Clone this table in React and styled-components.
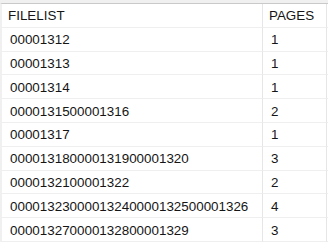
import React from "react";
import styled, { createGlobalStyle } from "styled-components";

const Global = createGlobalStyle`
  html, body { margin: 0; padding: 0; background: #ffffff; }
  body { font-family: "Liberation Sans", Arial, sans-serif; }
`;

const Frame = styled.div`
  width: 328px;
  height: 242px;
  overflow: hidden;
  background: #ffffff;
  border-top: 3px solid #f0f0f0;
  box-sizing: border-box;
`;

const Grid = styled.div`
  display: grid;
  grid-template-columns: 261px 64px 1px;
  grid-auto-rows: 23.8px;
  border-top: 1px solid #c9c9c9;
  border-left: 2px solid #f0f0f0;
`;

const Cell = styled.div`
  box-sizing: border-box;
  border-bottom: 1px solid #efefef;
  border-right: 1px solid #e6e6e6;
  display: flex;
  align-items: center;
  padding-left: ${(p) => (p.$header ? "6px" : "8px")};
  padding-top: 1px;
  font-size: 13.4px;
  color: #151515;
  white-space: nowrap;
  overflow: hidden;
  ${(p) => p.$num && `padding-left: ${p.$header ? "6px" : "8px"};`}
`;

const Edge = styled.div`
  box-sizing: border-box;
  border-bottom: 1px solid #efefef;
  background: #ffffff;
`;

const rows = [
  ["00001312", "1"],
  ["00001313", "1"],
  ["00001314", "1"],
  ["0000131500001316", "2"],
  ["00001317", "1"],
  ["000013180000131900001320", "3"],
  ["0000132100001322", "2"],
  ["00001323000013240000132500001326", "4"],
  ["000013270000132800001329", "3"],
];

export default function App() {
  return (
    <>
      <Global />
      <Frame>
        <Grid>
          <Cell $header>FILELIST</Cell>
          <Cell $header $num>PAGES</Cell>
          <Edge />
          {rows.map(([f, p], i) => (
            <React.Fragment key={i}>
              <Cell>{f}</Cell>
              <Cell $num>{p}</Cell>
              <Edge />
            </React.Fragment>
          ))}
        </Grid>
      </Frame>
    </>
  );
}
